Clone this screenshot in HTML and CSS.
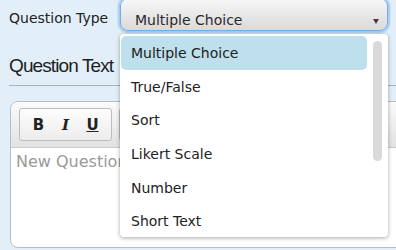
FILE: index.html
```html
<!DOCTYPE html>
<html lang="en">
<head>
    <meta charset="UTF-8">
    <meta name="viewport" content="width=device-width, initial-scale=1.0">
    <title>Edit Question</title>
    <link rel="stylesheet" href="styles.css">
</head>
<body>
    <div class="question-form">
        <div class="type-field">
            <label class="field-label">Question Type</label>
            <div class="select">
                <span class="select-value">Multiple Choice</span>
                <span class="select-arrow"></span>
            </div>
            <div class="dropdown">
                <ul class="options">
                    <li class="option selected">Multiple Choice</li>
                    <li class="option">True/False</li>
                    <li class="option">Sort</li>
                    <li class="option">Likert Scale</li>
                    <li class="option">Number</li>
                    <li class="option">Short Text</li>
                </ul>
                <div class="scrollbar"></div>
            </div>
        </div>

        <h3 class="section-title">Question Text</h3>

        <div class="editor">
            <div class="toolbar">
                <div class="btn-group">
                    <button class="tool-btn bold">B</button>
                    <button class="tool-btn italic">I</button>
                    <button class="tool-btn underline">U</button>
                </div>
                <div class="btn-group">
                    <button class="tool-btn">
                        <svg width="14" height="12" viewBox="0 0 14 12"><path d="M1 2h12M1 6h12M1 10h12" stroke="#333" stroke-width="2"/></svg>
                    </button>
                </div>
            </div>
            <div class="editor-body">New Question</div>
        </div>
    </div>
</body>
</html>
```

FILE: styles.css
```css
body {
    font-family: 'DejaVu Sans', Verdana, sans-serif;
    background: #e3eff8;
    margin: 0;
    overflow: hidden;
    color: #222;
}
.question-form {
    padding-left: 9px;
}
.type-field {
    position: relative;
    display: flex;
    margin-top: -2px;
    height: 33px;
}
.field-label {
    width: 111px;
    font-size: 14px;
    line-height: 17px;
    padding-top: 12px;
    color: #222;
}
.select {
    box-sizing: border-box;
    width: 268px;
    height: 33px;
    border: 1px solid #74aee6;
    border-radius: 8px;
    box-shadow: 0 0 2px 2px rgba(110, 170, 232, 0.55);
    background: linear-gradient(#f7f7f7, #dadada);
    display: flex;
    align-items: flex-start;
    justify-content: space-between;
    padding: 13px 8px 0 14px;
}
.select-value {
    font-size: 14px;
    line-height: 17px;
    color: #2a2a2a;
}
.select-arrow {
    margin-top: 7px;
    width: 0;
    height: 0;
    border-left: 3px solid transparent;
    border-right: 3px solid transparent;
    border-top: 5px solid #4a3d37;
}
.dropdown {
    position: absolute;
    left: 111px;
    top: 36px;
    width: 268px;
    height: 203px;
    box-sizing: border-box;
    background: #fff;
    border-radius: 4px;
    box-shadow: 0 1px 4px rgba(0, 0, 0, 0.35);
    z-index: 2;
    overflow: hidden;
}
.options {
    list-style: none;
    margin: 0;
    padding: 2px 21px 0 1px;
}
.option {
    height: 33.7px;
    line-height: 32px;
    padding: 1px 0 0 10px;
    box-sizing: border-box;
    font-size: 14px;
    color: #222;
    border-radius: 5px;
}
.option.selected {
    background: #bde0ec;
}
.scrollbar {
    position: absolute;
    right: 6px;
    top: 7px;
    width: 9px;
    height: 120px;
    border-radius: 5px;
    background: #d9d9d9;
}
.section-title {
    margin: 24px 0 0;
    font-family: 'Liberation Sans', Arial, sans-serif;
    font-weight: normal;
    font-size: 19px;
    letter-spacing: -0.9px;
    line-height: 22px;
    color: #1e1e1e;
    padding-bottom: 8px;
    border-bottom: 1px solid #a9b3ba;
}
.editor {
    margin: 15px -30px 0 1px;
    border: 1px solid #bcbcbc;
    border-radius: 8px;
    background: #fff;
    overflow: hidden;
}
.toolbar {
    display: flex;
    gap: 7px;
    height: 46px;
    box-sizing: border-box;
    padding: 6px 0 0 8px;
    background: linear-gradient(#fbfbfb, #e2e2e2);
    border-bottom: 1px solid #c9c9c9;
}
.btn-group {
    display: flex;
    height: 33px;
    box-sizing: border-box;
    border: 1px solid #bdbdbd;
    border-radius: 3px;
    background: linear-gradient(#fdfdfd, #ececec);
    padding: 0 5px;
}
.tool-btn {
    width: 27px;
    border: none;
    background: none;
    padding: 0;
    font-family: 'DejaVu Sans', Verdana, sans-serif;
    font-size: 15px;
    font-weight: bold;
    color: #222;
}
.tool-btn.italic {
    font-family: 'DejaVu Serif', serif;
    font-style: italic;
}
.tool-btn.underline {
    text-decoration: underline;
}
.editor-body {
    height: 99px;
    box-sizing: border-box;
    padding: 4px 5px;
    font-size: 16px;
    line-height: 19px;
    color: #9a9a9a;
}
```
